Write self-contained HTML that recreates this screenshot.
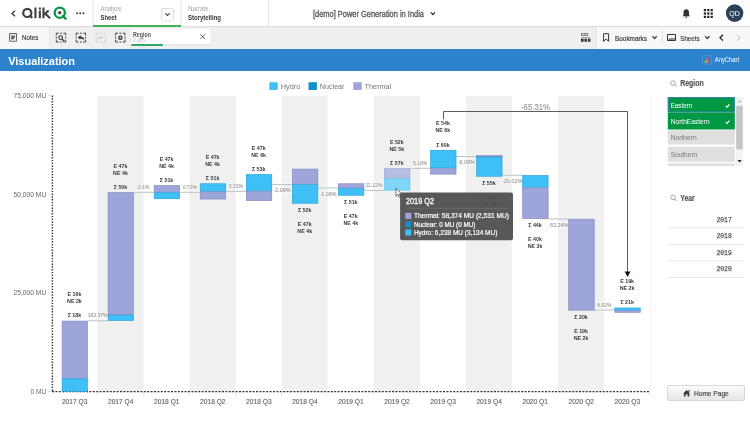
<!DOCTYPE html>
<html><head><meta charset="utf-8">
<style>
html,body{margin:0;padding:0;width:750px;height:422px;overflow:hidden;background:#fff;}
svg{position:absolute;left:0;top:0;display:block;will-change:transform;}
svg text{font-family:"Liberation Sans",sans-serif;}
</style></head><body>
<svg width="750" height="422" viewBox="0 0 750 422">
<rect x="0" y="0" width="750" height="26" fill="#fff"/>
<rect x="0" y="26" width="750" height="1" fill="#dcdcdc"/>
<path d="M15 10.8 L12 13.5 L15 16.2" stroke="#333" stroke-width="1.3" fill="none"/>
<g fill="#404040" stroke="none"><circle cx="27.3" cy="12.9" r="4.1" fill="none" stroke="#404040" stroke-width="2.2"/><path d="M29.6 15.1 L32.2 17.9" stroke="#404040" stroke-width="2.2"/><rect x="34.4" y="7.5" width="2.1" height="10.7"/><rect x="38.8" y="7.5" width="2.1" height="2.1"/><rect x="38.8" y="10.6" width="2.1" height="7.6"/><rect x="42.4" y="7.5" width="2.1" height="10.7"/><path d="M44 14.6 L48.6 10.5 M45.2 13.4 L50 18.3" stroke="#404040" stroke-width="2.1"/></g>
<circle cx="59.8" cy="12.7" r="5.1" fill="none" stroke="#009845" stroke-width="2.3"/>
<circle cx="59.8" cy="12.7" r="1.7" fill="#4a4a4a"/>
<path d="M62.9 15.9 L65.6 18.7" stroke="#009845" stroke-width="2.3" stroke-linecap="round"/>
<circle cx="77.0" cy="13.2" r="0.95" fill="#333"/>
<circle cx="80.2" cy="13.2" r="0.95" fill="#333"/>
<circle cx="83.4" cy="13.2" r="0.95" fill="#333"/>
<rect x="92.5" y="0" width="1" height="26" fill="#e6e6e6"/>
<rect x="180.5" y="0" width="1" height="26" fill="#e6e6e6"/>
<rect x="268" y="0" width="1" height="26" fill="#e6e6e6"/>
<text x="100.6" y="11" font-size="6.8" fill="#a5a5a5" font-weight="normal" text-anchor="start" textLength="20.8" lengthAdjust="spacingAndGlyphs" >Analyze</text>
<text x="100.5" y="19.6" font-size="7.2" fill="#333" font-weight="bold" text-anchor="start" textLength="16" lengthAdjust="spacingAndGlyphs" >Sheet</text>
<rect x="161.5" y="8.5" width="12" height="12.5" rx="1.5" fill="#fff" stroke="#d9d9d9" stroke-width="0.8"/>
<path d="M165.4 13.4 L167.5 15.5 L169.6 13.4" stroke="#444" stroke-width="1.2" fill="none"/>
<rect x="93" y="25" width="88" height="2" fill="#3db05a"/>
<text x="188" y="11" font-size="6.8" fill="#a5a5a5" font-weight="normal" text-anchor="start" textLength="20.5" lengthAdjust="spacingAndGlyphs" >Narrate</text>
<text x="188" y="19.6" font-size="7.2" fill="#333" font-weight="bold" text-anchor="start" textLength="33" lengthAdjust="spacingAndGlyphs" >Storytelling</text>
<text x="313" y="16.6" font-size="8.6" fill="#595959" font-weight="normal" text-anchor="start" textLength="111" lengthAdjust="spacingAndGlyphs" stroke="#595959" stroke-width="0.3">[demo] Power Generation in India</text>
<path d="M430.8 12.4 L432.9 14.5 L435 12.4" stroke="#333" stroke-width="1.3" fill="none"/>
<path d="M682.5 16.3 L690 16.3 L689 15 L689 12.3 Q689 9.3 686.3 9.3 Q683.5 9.3 683.5 12.3 L683.5 15 Z" fill="#333"/>
<rect x="685.3" y="16.6" width="2" height="1.2" rx="0.6" fill="#333"/>
<rect x="703.8" y="9.0" width="2.2" height="2.2" fill="#222"/>
<rect x="703.8" y="12.4" width="2.2" height="2.2" fill="#222"/>
<rect x="703.8" y="15.8" width="2.2" height="2.2" fill="#222"/>
<rect x="707.1999999999999" y="9.0" width="2.2" height="2.2" fill="#222"/>
<rect x="707.1999999999999" y="12.4" width="2.2" height="2.2" fill="#222"/>
<rect x="707.1999999999999" y="15.8" width="2.2" height="2.2" fill="#222"/>
<rect x="710.5999999999999" y="9.0" width="2.2" height="2.2" fill="#222"/>
<rect x="710.5999999999999" y="12.4" width="2.2" height="2.2" fill="#222"/>
<rect x="710.5999999999999" y="15.8" width="2.2" height="2.2" fill="#222"/>
<circle cx="734.6" cy="13.1" r="8.8" fill="#2b4159"/>
<text x="734.6" y="15.6" font-size="7" fill="#fff" font-weight="normal" text-anchor="middle" >QD</text>
<rect x="0" y="27" width="750" height="22" fill="#efefef"/>
<rect x="0" y="27" width="49" height="22" fill="#f8f8f8"/>
<rect x="49" y="27" width="1" height="22" fill="#e4e4e4"/>
<rect x="597" y="27" width="153" height="22" fill="#f8f8f8"/>
<rect x="596" y="27" width="1" height="22" fill="#e4e4e4"/>
<rect x="9.6" y="33.5" width="6.9" height="7.8" rx="0.6" fill="none" stroke="#666" stroke-width="1.1"/>
<rect x="10" y="33.2" width="6.1" height="0.9" fill="#666"/>
<path d="M11.2 35.5 H14.9 V37.5 L13.1 39.4 H11.2 Z" fill="#666"/>
<text x="22.1" y="40.3" font-size="7.6" fill="#3d3d3d" font-weight="normal" text-anchor="start" textLength="16.2" lengthAdjust="spacingAndGlyphs" stroke="#3d3d3d" stroke-width="0.2">Notes</text>
<path d="M56.3 35.6 V33.2 H58.699999999999996 M63.300000000000004 33.2 H65.7 V35.6 M65.7 39.6 V42.0 H63.300000000000004 M58.699999999999996 42.0 H56.3 V39.6 M60.1 33.2 H61.9 M60.1 42.0 H61.9 M56.3 36.7 V38.5 M65.7 36.7 V38.5" fill="none" stroke="#444" stroke-width="1.0"/>
<circle cx="60.6" cy="37.6" r="1.9" fill="none" stroke="#333" stroke-width="1.1"/><path d="M62 39 L64.2 41.2" stroke="#333" stroke-width="1.3"/>
<path d="M76.2 35.6 V33.2 H78.60000000000001 M83.2 33.2 H85.60000000000001 V35.6 M85.60000000000001 39.6 V42.0 H83.2 M78.60000000000001 42.0 H76.2 V39.6 M80.0 33.2 H81.80000000000001 M80.0 42.0 H81.80000000000001 M76.2 36.7 V38.5 M85.60000000000001 36.7 V38.5" fill="none" stroke="#444" stroke-width="1.0"/>
<path d="M77.9 37.2 L80.7 35.2 L80.5 36.6 Q83.8 36.9 84.3 40 Q82.6 38.7 80.4 38.6 L80.2 39.8 Z" fill="#333"/>
<path d="M96.1 35.6 V33.2 H98.5 M103.1 33.2 H105.5 V35.6 M105.5 39.6 V42.0 H103.1 M98.5 42.0 H96.1 V39.6 M99.89999999999999 33.2 H101.7 M99.89999999999999 42.0 H101.7 M96.1 36.7 V38.5 M105.5 36.7 V38.5" fill="none" stroke="#cfcfcf" stroke-width="1.0"/>
<path d="M103.6 37.2 L100.8 35.2 L101 36.6 Q97.7 36.9 97.2 40 Q98.9 38.7 101.1 38.6 L101.3 39.8 Z" fill="#d0d0d0"/>
<path d="M115.6 35.6 V33.2 H118.0 M122.6 33.2 H125.0 V35.6 M125.0 39.6 V42.0 H122.6 M118.0 42.0 H115.6 V39.6 M119.39999999999999 33.2 H121.2 M119.39999999999999 42.0 H121.2 M115.6 36.7 V38.5 M125.0 36.7 V38.5" fill="none" stroke="#444" stroke-width="1.0"/>
<circle cx="120.4" cy="37.7" r="2.2" fill="#333"/><circle cx="120.4" cy="37.7" r="0.85" fill="#efefef"/>
<rect x="131.3" y="29" width="79" height="17" rx="1" fill="#fff"/>
<rect x="131.3" y="44.2" width="79" height="1.6" fill="#e2e2e2"/>
<rect x="131.3" y="44.2" width="31.5" height="1.6" fill="#009845"/>
<text x="133" y="36.7" font-size="6.6" fill="#555" font-weight="bold" text-anchor="start" textLength="18" lengthAdjust="spacingAndGlyphs" >Region</text>
<text x="133" y="41.8" font-size="5.6" fill="#b0b0b0" font-weight="normal" text-anchor="start" textLength="12" lengthAdjust="spacingAndGlyphs" >2 of 5</text>
<path d="M200.3 34.3 L205 39 M205 34.3 L200.3 39" stroke="#555" stroke-width="0.9"/>
<g fill="#333"><rect x="581.6" y="33.4" width="2.6" height="2.3" fill="none" stroke="#666" stroke-width="0.7"/><rect x="585.2" y="33.4" width="2.6" height="2.3" fill="none" stroke="#666" stroke-width="0.7"/><rect x="581.5" y="37.2" width="8.8" height="0.8" fill="#999"/><rect x="581" y="38.6" width="2.6" height="3.2"/><rect x="584.5" y="38.6" width="2.4" height="3.2"/><rect x="587.9" y="38.6" width="2.5" height="3.2"/></g>
<path d="M603.6 33.7 H608.6 V41.3 L606.1 39 L603.6 41.3 Z" fill="none" stroke="#333" stroke-width="1"/>
<text x="615" y="40.6" font-size="7.6" fill="#3d3d3d" font-weight="normal" text-anchor="start" textLength="32" lengthAdjust="spacingAndGlyphs" stroke="#3d3d3d" stroke-width="0.2">Bookmarks</text>
<path d="M652.4 36.3 L654.6 38.5 L656.8 36.3" stroke="#444" stroke-width="1.3" fill="none"/>
<rect x="662.2" y="31" width="0.8" height="12.6" fill="#dcdcdc"/>
<path d="M667.5 40.5 V34.5 H675.5 V40.5 Z M669.3 40.5 V39 H675.5" fill="none" stroke="#333" stroke-width="1"/>
<text x="680.3" y="40.6" font-size="7.6" fill="#3d3d3d" font-weight="normal" text-anchor="start" textLength="19.2" lengthAdjust="spacingAndGlyphs" stroke="#3d3d3d" stroke-width="0.2">Sheets</text>
<path d="M705.2 36.3 L707.4 38.5 L709.6 36.3" stroke="#444" stroke-width="1.3" fill="none"/>
<path d="M723 34.8 L720 37.7 L723 40.6" stroke="#222" stroke-width="1.3" fill="none"/>
<path d="M737 34.8 L740 37.7 L737 40.6" stroke="#c8c8c8" stroke-width="1.1" fill="none"/>
<rect x="0" y="49" width="750" height="22" fill="#2d82cc"/>
<text x="8.2" y="64.8" font-size="11.6" fill="#fff" font-weight="bold" text-anchor="start" textLength="66.8" lengthAdjust="spacingAndGlyphs" >Visualization</text>
<rect x="702.5" y="55.6" width="9" height="8.6" rx="1" fill="none" stroke="#5c9bd6" stroke-width="0.6"/>
<rect x="704.4" y="61" width="1.4" height="2" fill="#7dc343"/><rect x="706.3" y="59.3" width="1.4" height="3.7" fill="#f39c33"/><rect x="708.3" y="57.4" width="1.4" height="5.6" fill="#d9503f"/>
<text x="714.8" y="62.4" font-size="7" fill="#fff" font-weight="normal" text-anchor="start" textLength="24.2" lengthAdjust="spacingAndGlyphs" >AnyChart</text>
<rect x="97.46000000000001" y="95.8" width="46.06" height="295.7" fill="#f0f0f0"/>
<rect x="189.58" y="95.8" width="46.06" height="295.7" fill="#f0f0f0"/>
<rect x="281.7" y="95.8" width="46.06" height="295.7" fill="#f0f0f0"/>
<rect x="373.82" y="95.8" width="46.06" height="295.7" fill="#f0f0f0"/>
<rect x="465.94" y="95.8" width="46.06" height="295.7" fill="#f0f0f0"/>
<rect x="558.0600000000001" y="95.8" width="46.06" height="295.7" fill="#f0f0f0"/>
<rect x="650.2" y="95" width="0.8" height="296" fill="#f0f0f0"/>
<rect x="269.3" y="82.2" width="8.4" height="7.8" fill="#3ec0f6"/>
<text x="280.7" y="88.6" font-size="7.8" fill="#777" font-weight="normal" text-anchor="start" textLength="19.6" lengthAdjust="spacingAndGlyphs" >Hydro</text>
<rect x="308.5" y="82.2" width="8.4" height="7.8" fill="#168fcf"/>
<text x="319.8" y="88.6" font-size="7.8" fill="#777" font-weight="normal" text-anchor="start" textLength="24.7" lengthAdjust="spacingAndGlyphs" >Nuclear</text>
<rect x="353.3" y="82.2" width="8.4" height="7.8" fill="#9ea5da"/>
<text x="364.6" y="88.6" font-size="7.8" fill="#777" font-weight="normal" text-anchor="start" textLength="26.7" lengthAdjust="spacingAndGlyphs" >Thermal</text>
<text x="13.6" y="98.1" font-size="7.1" fill="#666" font-weight="normal" text-anchor="start" textLength="32.6" lengthAdjust="spacingAndGlyphs" >75,000 MU</text>
<rect x="48.2" y="95.1" width="2.2" height="0.8" fill="#ccc"/>
<text x="13.6" y="196.79999999999998" font-size="7.1" fill="#666" font-weight="normal" text-anchor="start" textLength="32.6" lengthAdjust="spacingAndGlyphs" >50,000 MU</text>
<rect x="48.2" y="193.79999999999998" width="2.2" height="0.8" fill="#ccc"/>
<text x="13.6" y="295.40000000000003" font-size="7.1" fill="#666" font-weight="normal" text-anchor="start" textLength="32.6" lengthAdjust="spacingAndGlyphs" >25,000 MU</text>
<rect x="48.2" y="292.40000000000003" width="2.2" height="0.8" fill="#ccc"/>
<text x="30.5" y="394.1" font-size="7.1" fill="#666" font-weight="normal" text-anchor="start" textLength="15.700000000000003" lengthAdjust="spacingAndGlyphs" >0 MU</text>
<rect x="48.2" y="391.1" width="2.2" height="0.8" fill="#ccc"/>
<line x1="52.4" y1="95.5" x2="52.4" y2="391.5" stroke="#333" stroke-width="1.4" stroke-dasharray="1.4 1.4"/>
<line x1="52" y1="391.7" x2="650.5" y2="391.7" stroke="#333" stroke-width="1.3" stroke-dasharray="2 1.4"/>
<rect x="97.06" y="392.4" width="0.8" height="3" fill="#ddd"/>
<rect x="143.12" y="392.4" width="0.8" height="3" fill="#ddd"/>
<rect x="189.18" y="392.4" width="0.8" height="3" fill="#ddd"/>
<rect x="235.24" y="392.4" width="0.8" height="3" fill="#ddd"/>
<rect x="281.3" y="392.4" width="0.8" height="3" fill="#ddd"/>
<rect x="327.36" y="392.4" width="0.8" height="3" fill="#ddd"/>
<rect x="373.42" y="392.4" width="0.8" height="3" fill="#ddd"/>
<rect x="419.48" y="392.4" width="0.8" height="3" fill="#ddd"/>
<rect x="465.54" y="392.4" width="0.8" height="3" fill="#ddd"/>
<rect x="511.6" y="392.4" width="0.8" height="3" fill="#ddd"/>
<rect x="557.6600000000001" y="392.4" width="0.8" height="3" fill="#ddd"/>
<rect x="603.72" y="392.4" width="0.8" height="3" fill="#ddd"/>
<rect x="649.78" y="392.4" width="0.8" height="3" fill="#ddd"/>
<text x="74.63000000000001" y="404.4" font-size="7.4" fill="#666" font-weight="normal" text-anchor="middle" textLength="25.5" lengthAdjust="spacingAndGlyphs" stroke="#666" stroke-width="0.15">2017 Q3</text>
<text x="120.69000000000001" y="404.4" font-size="7.4" fill="#666" font-weight="normal" text-anchor="middle" textLength="25.5" lengthAdjust="spacingAndGlyphs" stroke="#666" stroke-width="0.15">2017 Q4</text>
<text x="166.75" y="404.4" font-size="7.4" fill="#666" font-weight="normal" text-anchor="middle" textLength="25.5" lengthAdjust="spacingAndGlyphs" stroke="#666" stroke-width="0.15">2018 Q1</text>
<text x="212.81" y="404.4" font-size="7.4" fill="#666" font-weight="normal" text-anchor="middle" textLength="25.5" lengthAdjust="spacingAndGlyphs" stroke="#666" stroke-width="0.15">2018 Q2</text>
<text x="258.87" y="404.4" font-size="7.4" fill="#666" font-weight="normal" text-anchor="middle" textLength="25.5" lengthAdjust="spacingAndGlyphs" stroke="#666" stroke-width="0.15">2018 Q3</text>
<text x="304.93" y="404.4" font-size="7.4" fill="#666" font-weight="normal" text-anchor="middle" textLength="25.5" lengthAdjust="spacingAndGlyphs" stroke="#666" stroke-width="0.15">2018 Q4</text>
<text x="350.98999999999995" y="404.4" font-size="7.4" fill="#666" font-weight="normal" text-anchor="middle" textLength="25.5" lengthAdjust="spacingAndGlyphs" stroke="#666" stroke-width="0.15">2019 Q1</text>
<text x="397.05" y="404.4" font-size="7.4" fill="#666" font-weight="normal" text-anchor="middle" textLength="25.5" lengthAdjust="spacingAndGlyphs" stroke="#666" stroke-width="0.15">2019 Q2</text>
<text x="443.10999999999996" y="404.4" font-size="7.4" fill="#666" font-weight="normal" text-anchor="middle" textLength="25.5" lengthAdjust="spacingAndGlyphs" stroke="#666" stroke-width="0.15">2019 Q3</text>
<text x="489.17" y="404.4" font-size="7.4" fill="#666" font-weight="normal" text-anchor="middle" textLength="25.5" lengthAdjust="spacingAndGlyphs" stroke="#666" stroke-width="0.15">2019 Q4</text>
<text x="535.23" y="404.4" font-size="7.4" fill="#666" font-weight="normal" text-anchor="middle" textLength="25.5" lengthAdjust="spacingAndGlyphs" stroke="#666" stroke-width="0.15">2020 Q1</text>
<text x="581.2900000000001" y="404.4" font-size="7.4" fill="#666" font-weight="normal" text-anchor="middle" textLength="25.5" lengthAdjust="spacingAndGlyphs" stroke="#666" stroke-width="0.15">2020 Q2</text>
<text x="627.35" y="404.4" font-size="7.4" fill="#666" font-weight="normal" text-anchor="middle" textLength="25.5" lengthAdjust="spacingAndGlyphs" stroke="#666" stroke-width="0.15">2020 Q3</text>
<rect x="87.8" y="319.3" width="20.060000000000016" height="1" fill="#ffffff" opacity="0.8"/>
<rect x="87.8" y="320.3" width="20.060000000000016" height="1" fill="#b9c3c3"/>
<rect x="133.86" y="190.8" width="20.060000000000002" height="1" fill="#ffffff" opacity="0.8"/>
<rect x="133.86" y="191.8" width="20.060000000000002" height="1" fill="#b9c3c3"/>
<rect x="179.92000000000002" y="190.8" width="20.060000000000002" height="1" fill="#ffffff" opacity="0.8"/>
<rect x="179.92000000000002" y="191.8" width="20.060000000000002" height="1" fill="#b9c3c3"/>
<rect x="225.98000000000002" y="189.8" width="20.060000000000002" height="1" fill="#ffffff" opacity="0.8"/>
<rect x="225.98000000000002" y="190.8" width="20.060000000000002" height="1" fill="#b9c3c3"/>
<rect x="272.04" y="182.9" width="20.059999999999945" height="1" fill="#ffffff" opacity="0.8"/>
<rect x="272.04" y="183.9" width="20.059999999999945" height="1" fill="#b9c3c3"/>
<rect x="318.09999999999997" y="186.4" width="20.060000000000002" height="1" fill="#ffffff" opacity="0.8"/>
<rect x="318.09999999999997" y="187.4" width="20.060000000000002" height="1" fill="#b9c3c3"/>
<rect x="364.15999999999997" y="188.9" width="20.060000000000002" height="1" fill="#ffffff" opacity="0.8"/>
<rect x="364.15999999999997" y="189.9" width="20.060000000000002" height="1" fill="#b9c3c3"/>
<rect x="410.21999999999997" y="166.8" width="20.060000000000002" height="1" fill="#ffffff" opacity="0.8"/>
<rect x="410.21999999999997" y="167.8" width="20.060000000000002" height="1" fill="#b9c3c3"/>
<rect x="456.28" y="155.0" width="20.060000000000002" height="1" fill="#ffffff" opacity="0.8"/>
<rect x="456.28" y="156.0" width="20.060000000000002" height="1" fill="#b9c3c3"/>
<rect x="502.34" y="173.7" width="20.060000000000002" height="1" fill="#ffffff" opacity="0.8"/>
<rect x="502.34" y="174.7" width="20.060000000000002" height="1" fill="#b9c3c3"/>
<rect x="548.4" y="217.4" width="20.06000000000006" height="1" fill="#ffffff" opacity="0.8"/>
<rect x="548.4" y="218.4" width="20.06000000000006" height="1" fill="#b9c3c3"/>
<rect x="594.46" y="308.6" width="20.059999999999945" height="1" fill="#ffffff" opacity="0.8"/>
<rect x="594.46" y="309.6" width="20.059999999999945" height="1" fill="#b9c3c3"/>
<rect x="86.68500000000002" y="312.2" width="21.95" height="6.4" fill="#fff" opacity="0.35"/>
<text x="97.66000000000001" y="317.2" font-size="6.0" fill="#a3a3a3" font-weight="normal" text-anchor="middle" textLength="19.95" lengthAdjust="spacingAndGlyphs" stroke="#a3a3a3" stroke-width="0.15">183.37%</text>
<rect x="137.02000000000004" y="183.70000000000002" width="13.4" height="6.4" fill="#fff" opacity="0.35"/>
<text x="143.72000000000003" y="188.70000000000002" font-size="6.0" fill="#a3a3a3" font-weight="normal" text-anchor="middle" textLength="11.4" lengthAdjust="spacingAndGlyphs" stroke="#a3a3a3" stroke-width="0.15">0.1%</text>
<rect x="181.65500000000003" y="183.70000000000002" width="16.25" height="6.4" fill="#fff" opacity="0.35"/>
<text x="189.78000000000003" y="188.70000000000002" font-size="6.0" fill="#a3a3a3" font-weight="normal" text-anchor="middle" textLength="14.25" lengthAdjust="spacingAndGlyphs" stroke="#a3a3a3" stroke-width="0.15">0.72%</text>
<rect x="227.71500000000003" y="182.70000000000002" width="16.25" height="6.4" fill="#fff" opacity="0.35"/>
<text x="235.84000000000003" y="187.70000000000002" font-size="6.0" fill="#a3a3a3" font-weight="normal" text-anchor="middle" textLength="14.25" lengthAdjust="spacingAndGlyphs" stroke="#a3a3a3" stroke-width="0.15">3.31%</text>
<rect x="272.34999999999997" y="187.20000000000002" width="19.1" height="6.4" fill="#fff" opacity="0.35"/>
<text x="281.9" y="192.20000000000002" font-size="6.0" fill="#a3a3a3" font-weight="normal" text-anchor="middle" textLength="17.1" lengthAdjust="spacingAndGlyphs" stroke="#a3a3a3" stroke-width="0.15">-2.06%</text>
<rect x="318.40999999999997" y="190.70000000000002" width="19.1" height="6.4" fill="#fff" opacity="0.35"/>
<text x="327.96" y="195.70000000000002" font-size="6.0" fill="#a3a3a3" font-weight="normal" text-anchor="middle" textLength="17.1" lengthAdjust="spacingAndGlyphs" stroke="#a3a3a3" stroke-width="0.15">-1.08%</text>
<rect x="364.46999999999997" y="181.8" width="19.1" height="6.4" fill="#fff" opacity="0.35"/>
<text x="374.02" y="186.8" font-size="6.0" fill="#a3a3a3" font-weight="normal" text-anchor="middle" textLength="17.1" lengthAdjust="spacingAndGlyphs" stroke="#a3a3a3" stroke-width="0.15">11.12%</text>
<rect x="411.955" y="159.70000000000002" width="16.25" height="6.4" fill="#fff" opacity="0.35"/>
<text x="420.08" y="164.70000000000002" font-size="6.0" fill="#a3a3a3" font-weight="normal" text-anchor="middle" textLength="14.25" lengthAdjust="spacingAndGlyphs" stroke="#a3a3a3" stroke-width="0.15">5.16%</text>
<rect x="456.59" y="159.3" width="19.1" height="6.4" fill="#fff" opacity="0.35"/>
<text x="466.14" y="164.3" font-size="6.0" fill="#a3a3a3" font-weight="normal" text-anchor="middle" textLength="17.1" lengthAdjust="spacingAndGlyphs" stroke="#a3a3a3" stroke-width="0.15">-8.08%</text>
<rect x="501.225" y="178.0" width="21.95" height="6.4" fill="#fff" opacity="0.35"/>
<text x="512.2" y="183.0" font-size="6.0" fill="#a3a3a3" font-weight="normal" text-anchor="middle" textLength="19.95" lengthAdjust="spacingAndGlyphs" stroke="#a3a3a3" stroke-width="0.15">-20.02%</text>
<rect x="547.285" y="221.70000000000002" width="21.95" height="6.4" fill="#fff" opacity="0.35"/>
<text x="558.26" y="226.70000000000002" font-size="6.0" fill="#a3a3a3" font-weight="normal" text-anchor="middle" textLength="19.95" lengthAdjust="spacingAndGlyphs" stroke="#a3a3a3" stroke-width="0.15">-53.24%</text>
<rect x="596.1949999999999" y="301.5" width="16.25" height="6.4" fill="#fff" opacity="0.35"/>
<text x="604.3199999999999" y="306.5" font-size="6.0" fill="#a3a3a3" font-weight="normal" text-anchor="middle" textLength="14.25" lengthAdjust="spacingAndGlyphs" stroke="#a3a3a3" stroke-width="0.15">6.92%</text>
<rect x="62.05" y="321.05" width="25.5" height="57.30000000000001" fill="#9ea5da" stroke="#7e85bd" stroke-width="0.6"/>
<rect x="62.05" y="378.85" width="25.5" height="12.399999999999977" fill="#3ec0f6" stroke="#1f9fd8" stroke-width="0.6"/>
<rect x="108.11000000000001" y="192.55" width="25.5" height="122.0" fill="#9ea5da" stroke="#7e85bd" stroke-width="0.6"/>
<rect x="108.11000000000001" y="315.05" width="25.5" height="5.5" fill="#3ec0f6" stroke="#1f9fd8" stroke-width="0.6"/>
<rect x="154.17000000000002" y="185.55" width="25.5" height="6.699999999999989" fill="#9ea5da" stroke="#7e85bd" stroke-width="0.6"/>
<rect x="154.17000000000002" y="192.75" width="25.5" height="6.0" fill="#3ec0f6" stroke="#1f9fd8" stroke-width="0.6"/>
<rect x="200.23000000000002" y="183.75" width="25.5" height="7.599999999999994" fill="#3ec0f6" stroke="#1f9fd8" stroke-width="0.6"/>
<rect x="200.23000000000002" y="191.85" width="25.5" height="7.200000000000017" fill="#9ea5da" stroke="#7e85bd" stroke-width="0.6"/>
<rect x="246.29000000000002" y="174.45" width="25.5" height="16.30000000000001" fill="#3ec0f6" stroke="#1f9fd8" stroke-width="0.6"/>
<rect x="246.29000000000002" y="191.25" width="25.5" height="9.400000000000006" fill="#9ea5da" stroke="#7e85bd" stroke-width="0.6"/>
<rect x="292.34999999999997" y="169.05" width="25.5" height="15.199999999999989" fill="#9ea5da" stroke="#7e85bd" stroke-width="0.6"/>
<rect x="292.34999999999997" y="184.75" width="25.5" height="18.5" fill="#3ec0f6" stroke="#1f9fd8" stroke-width="0.6"/>
<rect x="338.40999999999997" y="183.75" width="25.5" height="4.199999999999989" fill="#9ea5da" stroke="#7e85bd" stroke-width="0.6"/>
<rect x="338.40999999999997" y="188.45" width="25.5" height="6.800000000000011" fill="#3ec0f6" stroke="#1f9fd8" stroke-width="0.6"/>
<rect x="384.46999999999997" y="168.55" width="25.5" height="9.799999999999983" fill="#b7bce3" stroke="#9ea4d6" stroke-width="0.6"/>
<rect x="384.46999999999997" y="178.85" width="25.5" height="11.400000000000006" fill="#7fd6f9" stroke="#5cc6f2" stroke-width="0.6"/>
<rect x="430.53" y="150.25" width="25.5" height="17.69999999999999" fill="#3ec0f6" stroke="#1f9fd8" stroke-width="0.6"/>
<rect x="430.53" y="168.45" width="25.5" height="5.700000000000017" fill="#9ea5da" stroke="#7e85bd" stroke-width="0.6"/>
<rect x="476.59" y="155.65" width="25.5" height="1.0999999999999943" fill="#8a90c8" stroke="#7e85bd" stroke-width="0.6"/>
<rect x="476.59" y="157.05" width="25.5" height="19.19999999999999" fill="#3ec0f6" stroke="#1f9fd8" stroke-width="0.6"/>
<rect x="522.65" y="175.45" width="25.5" height="11.900000000000006" fill="#3ec0f6" stroke="#1f9fd8" stroke-width="0.6"/>
<rect x="522.65" y="187.85" width="25.5" height="30.80000000000001" fill="#9ea5da" stroke="#7e85bd" stroke-width="0.6"/>
<rect x="568.71" y="219.15" width="25.5" height="90.99999999999997" fill="#9ea5da" stroke="#7e85bd" stroke-width="0.6"/>
<rect x="614.77" y="307.95" width="25.5" height="2.3000000000000114" fill="#3ec0f6" stroke="#1f9fd8" stroke-width="0.6"/>
<rect x="614.77" y="310.75" width="25.5" height="1.6000000000000227" fill="#9ea5da" stroke="#7e85bd" stroke-width="0.6"/>
<text x="74.43" y="296.25" font-size="5.3" fill="#3a3a3a" font-weight="bold" text-anchor="middle" >E 16k</text>
<text x="74.43" y="303.15" font-size="5.3" fill="#3a3a3a" font-weight="bold" text-anchor="middle" >NE 2k</text>
<text x="74.43" y="317.45" font-size="5.3" fill="#3a3a3a" font-weight="bold" text-anchor="middle" >&#931; 18k</text>
<text x="120.49000000000001" y="167.74999999999997" font-size="5.3" fill="#3a3a3a" font-weight="bold" text-anchor="middle" >E 47k</text>
<text x="120.49000000000001" y="174.64999999999998" font-size="5.3" fill="#3a3a3a" font-weight="bold" text-anchor="middle" >NE 4k</text>
<text x="120.49000000000001" y="188.95" font-size="5.3" fill="#3a3a3a" font-weight="bold" text-anchor="middle" >&#931; 50k</text>
<text x="166.55" y="160.74999999999997" font-size="5.3" fill="#3a3a3a" font-weight="bold" text-anchor="middle" >E 47k</text>
<text x="166.55" y="167.64999999999998" font-size="5.3" fill="#3a3a3a" font-weight="bold" text-anchor="middle" >NE 4k</text>
<text x="166.55" y="181.95" font-size="5.3" fill="#3a3a3a" font-weight="bold" text-anchor="middle" >&#931; 51k</text>
<text x="212.61" y="158.94999999999996" font-size="5.3" fill="#3a3a3a" font-weight="bold" text-anchor="middle" >E 47k</text>
<text x="212.61" y="165.84999999999997" font-size="5.3" fill="#3a3a3a" font-weight="bold" text-anchor="middle" >NE 4k</text>
<text x="212.61" y="180.14999999999998" font-size="5.3" fill="#3a3a3a" font-weight="bold" text-anchor="middle" >&#931; 51k</text>
<text x="258.67" y="149.64999999999995" font-size="5.3" fill="#3a3a3a" font-weight="bold" text-anchor="middle" >E 47k</text>
<text x="258.67" y="156.54999999999995" font-size="5.3" fill="#3a3a3a" font-weight="bold" text-anchor="middle" >NE 6k</text>
<text x="258.67" y="170.84999999999997" font-size="5.3" fill="#3a3a3a" font-weight="bold" text-anchor="middle" >&#931; 53k</text>
<text x="304.73" y="225.95" font-size="5.3" fill="#3a3a3a" font-weight="bold" text-anchor="middle" >E 47k</text>
<text x="304.73" y="232.75" font-size="5.3" fill="#3a3a3a" font-weight="bold" text-anchor="middle" >NE 4k</text>
<text x="304.73" y="211.85" font-size="5.3" fill="#3a3a3a" font-weight="bold" text-anchor="middle" >&#931; 52k</text>
<text x="350.78999999999996" y="217.95" font-size="5.3" fill="#3a3a3a" font-weight="bold" text-anchor="middle" >E 47k</text>
<text x="350.78999999999996" y="224.75" font-size="5.3" fill="#3a3a3a" font-weight="bold" text-anchor="middle" >NE 4k</text>
<text x="350.78999999999996" y="203.85" font-size="5.3" fill="#3a3a3a" font-weight="bold" text-anchor="middle" >&#931; 51k</text>
<text x="396.85" y="143.74999999999997" font-size="5.3" fill="#3a3a3a" font-weight="bold" text-anchor="middle" >E 52k</text>
<text x="396.85" y="150.64999999999998" font-size="5.3" fill="#3a3a3a" font-weight="bold" text-anchor="middle" >NE 5k</text>
<text x="396.85" y="164.95" font-size="5.3" fill="#3a3a3a" font-weight="bold" text-anchor="middle" >&#931; 57k</text>
<text x="442.90999999999997" y="125.44999999999997" font-size="5.3" fill="#3a3a3a" font-weight="bold" text-anchor="middle" >E 54k</text>
<text x="442.90999999999997" y="132.34999999999997" font-size="5.3" fill="#3a3a3a" font-weight="bold" text-anchor="middle" >NE 6k</text>
<text x="442.90999999999997" y="146.64999999999998" font-size="5.3" fill="#3a3a3a" font-weight="bold" text-anchor="middle" >&#931; 60k</text>
<text x="488.97" y="198.95" font-size="5.3" fill="#3a3a3a" font-weight="bold" text-anchor="middle" >E 56k</text>
<text x="488.97" y="205.75" font-size="5.3" fill="#3a3a3a" font-weight="bold" text-anchor="middle" >NE 5k</text>
<text x="488.97" y="184.85" font-size="5.3" fill="#3a3a3a" font-weight="bold" text-anchor="middle" >&#931; 55k</text>
<text x="535.03" y="241.35" font-size="5.3" fill="#3a3a3a" font-weight="bold" text-anchor="middle" >E 40k</text>
<text x="535.03" y="248.15" font-size="5.3" fill="#3a3a3a" font-weight="bold" text-anchor="middle" >NE 3k</text>
<text x="535.03" y="227.25" font-size="5.3" fill="#3a3a3a" font-weight="bold" text-anchor="middle" >&#931; 44k</text>
<text x="581.09" y="332.84999999999997" font-size="5.3" fill="#3a3a3a" font-weight="bold" text-anchor="middle" >E 19k</text>
<text x="581.09" y="339.65" font-size="5.3" fill="#3a3a3a" font-weight="bold" text-anchor="middle" >NE 2k</text>
<text x="581.09" y="318.74999999999994" font-size="5.3" fill="#3a3a3a" font-weight="bold" text-anchor="middle" >&#931; 20k</text>
<text x="627.15" y="283.15" font-size="5.3" fill="#3a3a3a" font-weight="bold" text-anchor="middle" >E 19k</text>
<text x="627.15" y="290.04999999999995" font-size="5.3" fill="#3a3a3a" font-weight="bold" text-anchor="middle" >NE 2k</text>
<text x="627.15" y="304.34999999999997" font-size="5.3" fill="#3a3a3a" font-weight="bold" text-anchor="middle" >&#931; 21k</text>
<path d="M443.5 119.3 V111.5 H627.5 V272" fill="none" stroke="#5a5a5a" stroke-width="1"/>
<path d="M624.7 271.4 L630.5 271.4 L627.6 277 Z" fill="#111"/>
<text x="535.5" y="110" font-size="9" fill="#999" font-weight="normal" text-anchor="middle" textLength="29" lengthAdjust="spacingAndGlyphs" stroke="#999" stroke-width="0.15">-65.31%</text>
<rect x="400.1" y="192.6" width="112.9" height="47.7" rx="2" fill="#4f4f4f" opacity="0.95"/>
<text x="406" y="204" font-size="9" fill="#fff" font-weight="normal" text-anchor="start" textLength="28" lengthAdjust="spacingAndGlyphs" stroke="#fff" stroke-width="0.3">2019 Q2</text>
<rect x="406" y="207.9" width="102" height="0.6" fill="#777"/>
<rect x="405.3" y="212.9" width="6" height="6" fill="#9ea5da"/>
<text x="413.9" y="218.20000000000002" font-size="7.2" fill="#fff" font-weight="normal" text-anchor="start" textLength="95" lengthAdjust="spacingAndGlyphs" stroke="#fff" stroke-width="0.2">Thermal: 58,374 MU (2,531 MU)</text>
<rect x="405.3" y="221.4" width="6" height="6" fill="#168fcf"/>
<text x="413.9" y="226.70000000000002" font-size="7.2" fill="#fff" font-weight="normal" text-anchor="start" textLength="61.5" lengthAdjust="spacingAndGlyphs" stroke="#fff" stroke-width="0.2">Nuclear: 0 MU (0 MU)</text>
<rect x="405.3" y="229.5" width="6" height="6" fill="#3ec0f6"/>
<text x="413.9" y="234.8" font-size="7.2" fill="#fff" font-weight="normal" text-anchor="start" textLength="83.5" lengthAdjust="spacingAndGlyphs" stroke="#fff" stroke-width="0.2">Hydro: 6,238 MU (3,134 MU)</text>
<path d="M396 188.3 L396 196.2 L398 194.4 L399.4 197.4 L400.6 196.8 L399.2 193.9 L401.8 193.8 Z" fill="#fff" stroke="#222" stroke-width="0.6"/>
<circle cx="673" cy="83" r="2.3" fill="none" stroke="#999" stroke-width="0.8"/><path d="M674.6 84.7 L676.6 86.7" stroke="#999" stroke-width="0.9"/>
<text x="680.2" y="86.3" font-size="8.6" fill="#595959" font-weight="bold" text-anchor="start" textLength="23.6" lengthAdjust="spacingAndGlyphs" stroke="#595959" stroke-width="0.2">Region</text>
<rect x="667.8" y="97" width="67" height="15.3" fill="#009845"/>
<rect x="668.3" y="97.5" width="66" height="14.5" fill="none" stroke="#3c7fb8" stroke-width="1"/>
<text x="670.7" y="107.7" font-size="7.6" fill="#fff" font-weight="normal" text-anchor="start" textLength="21.5" lengthAdjust="spacingAndGlyphs" >Eastern</text>
<path d="M725.8 105.9 L727.1 107.2 L729.4 104.3" stroke="#fff" stroke-width="1.2" fill="none"/>
<rect x="667.8" y="112.6" width="67" height="16.9" fill="#009845"/>
<text x="670.7" y="124.0" font-size="7.6" fill="#fff" font-weight="normal" text-anchor="start" textLength="39" lengthAdjust="spacingAndGlyphs" >NorthEastern</text>
<path d="M725.8 122.1 L727.1 123.4 L729.4 120.5" stroke="#fff" stroke-width="1.2" fill="none"/>
<rect x="667.8" y="130.3" width="67" height="14.3" fill="#dfdfdf"/>
<text x="670.7" y="140.3" font-size="7.6" fill="#777" font-weight="normal" text-anchor="start" textLength="26" lengthAdjust="spacingAndGlyphs" >Northern</text>
<rect x="667.8" y="146.7" width="67" height="15.2" fill="#dfdfdf"/>
<text x="670.7" y="156.7" font-size="7.6" fill="#777" font-weight="normal" text-anchor="start" textLength="26.5" lengthAdjust="spacingAndGlyphs" >Southern</text>
<rect x="667.8" y="163.3" width="67" height="2.9" fill="#dfdfdf"/>
<rect x="736" y="97" width="7" height="69" fill="#f3f3f3"/>
<rect x="736.2" y="105.9" width="6.6" height="43.4" fill="#c6c6c6"/>
<path d="M737.6 102.2 L739.6 100.2 L741.6 102.2 Z" fill="#b0b0b0"/>
<path d="M737.4 159.9 L739.6 162.5 L741.8 159.9 Z" fill="#333"/>
<circle cx="673" cy="197.3" r="2.3" fill="none" stroke="#999" stroke-width="0.8"/><path d="M674.6 199 L676.6 201" stroke="#999" stroke-width="0.9"/>
<text x="680.2" y="200.7" font-size="8.6" fill="#595959" font-weight="bold" text-anchor="start" textLength="14.6" lengthAdjust="spacingAndGlyphs" stroke="#595959" stroke-width="0.2">Year</text>
<text x="731.8" y="221.9" font-size="7.2" fill="#5a5a5a" font-weight="normal" text-anchor="end" textLength="15.4" lengthAdjust="spacingAndGlyphs" font-family="Liberation Mono" style="font-family:Liberation Mono" stroke="#5a5a5a" stroke-width="0.25">2017</text>
<rect x="667.8" y="227.5" width="76.2" height="0.8" fill="#e3e3e3"/>
<text x="731.8" y="238.35" font-size="7.2" fill="#5a5a5a" font-weight="normal" text-anchor="end" textLength="15.4" lengthAdjust="spacingAndGlyphs" font-family="Liberation Mono" style="font-family:Liberation Mono" stroke="#5a5a5a" stroke-width="0.25">2018</text>
<rect x="667.8" y="244.0" width="76.2" height="0.8" fill="#e3e3e3"/>
<text x="731.8" y="254.8" font-size="7.2" fill="#5a5a5a" font-weight="normal" text-anchor="end" textLength="15.4" lengthAdjust="spacingAndGlyphs" font-family="Liberation Mono" style="font-family:Liberation Mono" stroke="#5a5a5a" stroke-width="0.25">2019</text>
<rect x="667.8" y="260.5" width="76.2" height="0.8" fill="#e3e3e3"/>
<text x="731.8" y="271.25" font-size="7.2" fill="#5a5a5a" font-weight="normal" text-anchor="end" textLength="15.4" lengthAdjust="spacingAndGlyphs" font-family="Liberation Mono" style="font-family:Liberation Mono" stroke="#5a5a5a" stroke-width="0.25">2020</text>
<rect x="667.8" y="277.0" width="76.2" height="0.8" fill="#e3e3e3"/>
<defs><linearGradient id="hg" x1="0" y1="0" x2="0" y2="1"><stop offset="0" stop-color="#fbfbfb"/><stop offset="1" stop-color="#e6e6e6"/></linearGradient></defs>
<rect x="667.5" y="385.5" width="77" height="15" rx="1.5" fill="url(#hg)" stroke="#cfcfcf" stroke-width="0.8"/>
<path d="M683.2 393.4 L686.6 389.9 L690 393.4 L689.3 393.4 L689.3 396.4 L687.6 396.4 L687.6 394.2 L685.6 394.2 L685.6 396.4 L683.9 396.4 L683.9 393.4 Z" fill="#3a3a3a"/><rect x="688.4" y="390" width="1" height="2" fill="#3a3a3a"/>
<text x="694" y="396" font-size="7.6" fill="#4a4a4a" font-weight="normal" text-anchor="start" textLength="34.7" lengthAdjust="spacingAndGlyphs" stroke="#4a4a4a" stroke-width="0.2">Home Page</text>
</svg>
</body></html>
